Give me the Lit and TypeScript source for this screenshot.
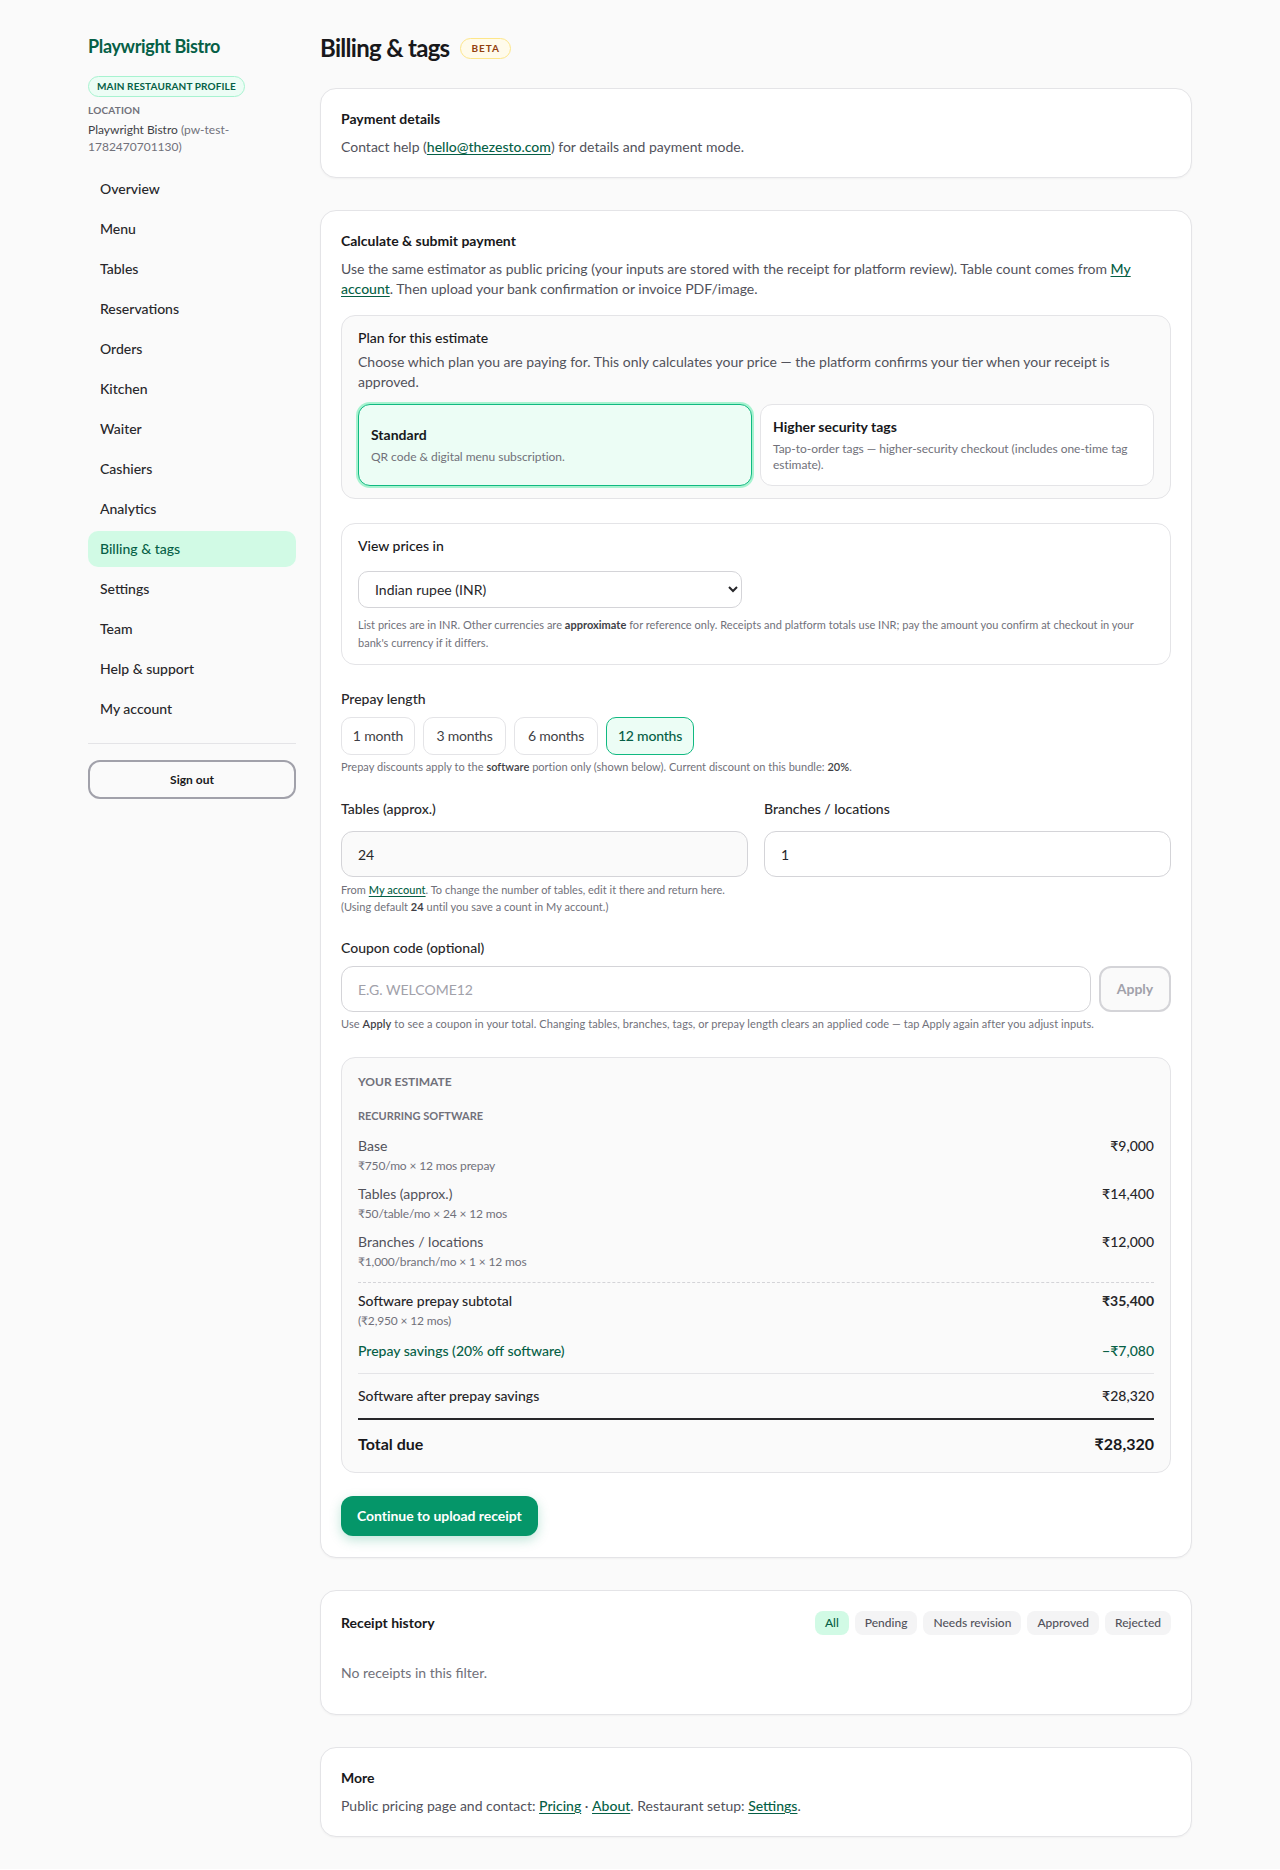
import {html, css, LitElement} from 'lit';
import {customElement} from 'lit/decorators.js';

const NAV = ['Overview', 'Menu', 'Tables', 'Reservations', 'Orders', 'Kitchen', 'Waiter', 'Cashiers', 'Analytics', 'Billing & tags', 'Settings', 'Team', 'Help & support', 'My account'];
const PREPAY = [
	{label: '1 month', width: 74},
	{label: '3 months', width: 83},
	{label: '6 months', width: 84},
	{label: '12 months', width: 88},
];
const LINES = [
	['Base', '₹750/mo × 12 mos prepay', '₹9,000'],
	['Tables (approx.)', '₹50/table/mo × 24 × 12 mos', '₹14,400'],
	['Branches / locations', '₹1,000/branch/mo × 1 × 12 mos', '₹12,000'],
];
const FILTERS = ['All', 'Pending', 'Needs revision', 'Approved', 'Rejected'];

@customElement('app-root')
export class AppRoot extends LitElement {
	static styles = css`
		:host {
			display: block;
			background: #fafafa;
			color: #52525b;
			font: 14px/20px Lato, "Noto Sans", sans-serif;
		}
		* { box-sizing: border-box; }
		a { color: #065f46; font-weight: 500; text-decoration: underline; text-underline-offset: 2px; }
		b { font-weight: 700; color: #3f3f46; }
		button, input, select { font: inherit; margin: 0; }

		.page {
			display: grid;
			grid-template-columns: 208px 872px;
			gap: 24px;
			width: 1104px;
			margin: 0 auto;
			padding: 32px 0;
		}

		/* sidebar */
		.brand { font-size: 18px; line-height: 28px; font-weight: 700; letter-spacing: -0.35px; color: #065f46; }
		.profile {
			display: inline-block;
			margin-top: 16px;
			padding: 0 8px;
			height: 21px;
			border: 1px solid #a7f3d0;
			border-radius: 999px;
			background: #ecfdf5;
			color: #065f46;
			font-size: 10px;
			line-height: 19px;
			font-weight: 700;
			letter-spacing: 0.12px;
			white-space: nowrap;
		}
		.loc-label { margin-top: 6px; font-size: 10px; line-height: 14px; font-weight: 700; letter-spacing: 0.2px; color: #71717a; }
		.loc { margin-top: 4px; font-size: 12px; line-height: 17px; color: #71717a; }
		.loc span { color: #3f3f46; }
		nav { display: flex; flex-direction: column; gap: 4px; margin-top: 16px; }
		nav a {
			height: 36px;
			padding: 0 12px;
			border-radius: 10px;
			color: #27272a;
			font-weight: 500;
			line-height: 36px;
			text-decoration: none;
		}
		nav a.on { background: #d1fae5; color: #065f46; }
		.rule { margin: 16px 0; border-top: 1px solid #e4e4e7; }
		.signout {
			width: 100%;
			height: 39px;
			border: 2px solid #a1a1aa;
			border-radius: 12px;
			background: #fafafa;
			color: #18181b;
			font-size: 12px;
			font-weight: 700;
		}

		/* main column */
		.head { display: flex; align-items: center; gap: 11px; height: 32px; margin-bottom: 24px; }
		h1 { margin: 0; font-size: 24px; line-height: 32px; font-weight: 700; letter-spacing: -0.7px; color: #18181b; }
		.beta {
			height: 21px;
			padding: 0 10px;
			border: 1px solid #fde68a;
			border-radius: 999px;
			background: #fffbeb;
			color: #92400e;
			font-size: 10px;
			line-height: 19px;
			font-weight: 700;
			letter-spacing: 1px;
		}
		.card {
			margin-bottom: 32px;
			padding: 20px;
			border: 1px solid #e4e4e7;
			border-radius: 16px;
			background: #fff;
			box-shadow: 0 1px 2px rgba(0, 0, 0, 0.04);
		}
		.card:last-child { margin-bottom: 0; }
		h2, h3 { margin: 0; font-size: 14px; line-height: 20px; font-weight: 700; color: #18181b; }
		.card > p { margin: 8px 0 0; }
		.box {
			margin-top: 24px;
			padding: 12px 16px;
			border: 1px solid #e4e4e7;
			border-radius: 14px;
		}
		.box.plan { margin-top: 16px; background: #fafafa; }
		.box h3 { font-weight: 500; }
		.box p { margin: 4px 0 0; }
		.plans { display: grid; grid-template-columns: 1fr 1fr; gap: 8px; margin-top: 12px; }
		.tier {
			display: flex;
			flex-direction: column;
			justify-content: center;
			height: 82px;
			padding: 12px;
			border: 1px solid #e4e4e7;
			border-radius: 12px;
			background: #fff;
		}
		.box .tier h3 { font-weight: 700; }
		.tier.on { border-color: #10b981; background: #ecfdf5; box-shadow: 0 0 0 2px #a7f3d0; }
		.tier small { display: block; margin-top: 4px; font-size: 12px; line-height: 16px; letter-spacing: -0.03px; color: #71717a; }
		select {
			display: block;
			width: 384px;
			height: 37px;
			margin-top: 15px;
			padding: 0 12px;
			border: 1px solid #d4d4d8;
			border-radius: 10px;
			background: #fff;
			color: #27272a;
		}
		.fine { font-size: 11px; line-height: 18px; letter-spacing: 0.02px; color: #71717a; }
		.box .fine { margin-top: 8px; }
		.fine.tight { margin-top: 4px; line-height: 16px; }
		.fine.tight b { font-weight: 600; }
		.fine.wide { letter-spacing: 0.08px; }
		label, .label { display: block; font-weight: 500; color: #27272a; }
		.prepay { margin-top: 24px; }
		.pills { display: flex; gap: 8px; margin-top: 8px; }
		.pill {
			height: 38px;
			padding: 0;
			border: 1px solid #e4e4e7;
			border-radius: 10px;
			background: #fff;
			color: #3f3f46;
			letter-spacing: -0.2px;
		}
		.pill.on { border: 1px solid #10b981; background: #ecfdf5; color: #065f46; font-weight: 500; }
		.fields { display: grid; grid-template-columns: 1fr 1fr; gap: 16px; margin-top: 24px; }
		input {
			display: block;
			width: 100%;
			height: 46px;
			margin-top: 12px;
			padding: 0 16px;
			border: 1px solid #d4d4d8;
			border-radius: 12px;
			background: #fff;
			color: #27272a;
		}
		input.locked { background: #fafafa; }
		input::placeholder { color: #a1a1aa; }
		.fine.two { margin-top: 4px; line-height: 17px; }
		.coupon-label { margin-top: 23px; }
		.coupon { display: flex; gap: 8px; margin-top: 8px; }
		.coupon input { flex: 1; margin: 0; }
		.apply {
			flex: none;
			width: 72px;
			height: 46px;
			border: 2px solid #d4d4d8;
			border-radius: 12px;
			background: #fafafa;
			color: #a1a1aa;
			font-weight: 700;
		}
		.estimate { margin-top: 25px; padding: 16px; background: #fafafa; }
		.est-title { font-size: 12px; line-height: 16px; font-weight: 700; color: #71717a; }
		.est-sub { margin-top: 18px; margin-bottom: 12px; font-size: 11px; line-height: 16px; font-weight: 700; color: #71717a; }
		.row { display: flex; justify-content: space-between; margin-top: 10px; color: #52525b; }
		.row small { display: block; margin-top: 2px; font-size: 12px; line-height: 16px; letter-spacing: -0.15px; color: #71717a; }
		.row .amt { color: #27272a; font-weight: 500; }
		.row.strong { color: #27272a; font-weight: 500; }
		.row.strong .amt { font-weight: 700; }
		.row.strong small { font-weight: 400; }
		.row.save, .row.save .amt { color: #065f46; font-weight: 500; }
		.dash { margin: 12px 0 8px; border-top: 1px dashed #d4d4d8; }
		.line { margin: 12px 0; border-top: 1px solid #e4e4e7; }
		.thick { margin: 12px 0 12px; border-top: 2px solid #27272a; }
		.row.flush { margin-top: 0; }
		.row.after .amt { font-weight: 500; }
		.row.spaced { margin-top: 12px; }
		.total { display: flex; justify-content: space-between; font-size: 16px; line-height: 24px; font-weight: 700; color: #18181b; }
		.cta {
			display: block;
			height: 40px;
			margin: 23px 0 1px;
			padding: 0 16px;
			border: 0;
			border-radius: 12px;
			background: #059669;
			color: #fff;
			font-weight: 700;
			letter-spacing: -0.05px;
			box-shadow: 0 4px 12px rgba(5, 150, 105, 0.25);
		}
		.history-head { display: flex; justify-content: space-between; align-items: center; }
		.filters { display: flex; gap: 6px; }
		.filter {
			height: 24px;
			padding: 0 10px;
			border: 0;
			border-radius: 8px;
			background: #f4f4f5;
			color: #52525b;
			font-size: 12px;
			font-weight: 500;
		}
		.filter.on { background: #d1fae5; color: #065f46; }
		.card > p.empty { margin: 28px 0 11px; color: #71717a; }
	`;

	render() {
		return html`
			<div class="page">
				<aside>
					<div class="brand">Playwright Bistro</div>
					<span class="profile">MAIN RESTAURANT PROFILE</span>
					<div class="loc-label">LOCATION</div>
					<div class="loc"><span>Playwright Bistro</span> (pw-test-1782470701130)</div>
					<nav>
						${NAV.map(n => html`<a class=${n === 'Billing & tags' ? 'on' : ''}>${n}</a>`)}
					</nav>
					<div class="rule"></div>
					<button class="signout">Sign out</button>
				</aside>
				<main>
					<div class="head"><h1>Billing &amp; tags</h1><span class="beta">BETA</span></div>

					<section class="card">
						<h2>Payment details</h2>
						<p>Contact help (<a>hello@thezesto.com</a>) for details and payment mode.</p>
					</section>

					<section class="card">
						<h2>Calculate &amp; submit payment</h2>
						<p>Use the same estimator as public pricing (your inputs are stored with the receipt for platform review). Table count comes from <a>My account</a>. Then upload your bank confirmation or invoice PDF/image.</p>

						<div class="box plan">
							<h3>Plan for this estimate</h3>
							<p>Choose which plan you are paying for. This only calculates your price — the platform confirms your tier when your receipt is approved.</p>
							<div class="plans">
								<div class="tier on"><h3>Standard</h3><small>QR code &amp; digital menu subscription.</small></div>
								<div class="tier"><h3>Higher security tags</h3><small>Tap-to-order tags — higher-security checkout (includes one-time tag estimate).</small></div>
							</div>
						</div>

						<div class="box">
							<h3>View prices in</h3>
							<select><option>Indian rupee (INR)</option></select>
							<div class="fine">List prices are in INR. Other currencies are <b>approximate</b> for reference only. Receipts and platform totals use INR; pay the amount you confirm at checkout in your bank's currency if it differs.</div>
						</div>

						<div class="label prepay">Prepay length</div>
						<div class="pills">
							${PREPAY.map(p => html`<button class="pill ${p.label === '12 months' ? 'on' : ''}" style="width:${p.width}px">${p.label}</button>`)}
						</div>
						<div class="fine tight">Prepay discounts apply to the <b>software</b> portion only (shown below). Current discount on this bundle: <b>20%</b>.</div>

						<div class="fields">
							<div><label>Tables (approx.)</label><input class="locked" value="24" /></div>
							<div><label>Branches / locations</label><input value="1" /></div>
						</div>
						<div class="fine two">From <a>My account</a>. To change the number of tables, edit it there and return here.<br />(Using default <b>24</b> until you save a count in My account.)</div>

						<label class="coupon-label">Coupon code (optional)</label>
						<div class="coupon">
							<input placeholder="E.G. WELCOME12" />
							<button class="apply">Apply</button>
						</div>
						<div class="fine tight wide">Use <b>Apply</b> to see a coupon in your total. Changing tables, branches, tags, or prepay length clears an applied code — tap Apply again after you adjust inputs.</div>

						<div class="box estimate">
							<div class="est-title">YOUR ESTIMATE</div>
							<div class="est-sub">RECURRING SOFTWARE</div>
							${LINES.map(l => html`<div class="row"><div>${l[0]}<small>${l[1]}</small></div><div class="amt">${l[2]}</div></div>`)}
							<div class="dash"></div>
							<div class="row strong flush"><div>Software prepay subtotal<small>(₹2,950 × 12 mos)</small></div><div class="amt">₹35,400</div></div>
							<div class="row save spaced"><div>Prepay savings (20% off software)</div><div class="amt">−₹7,080</div></div>
							<div class="line"></div>
							<div class="row strong flush after"><div>Software after prepay savings</div><div class="amt">₹28,320</div></div>
							<div class="thick"></div>
							<div class="total"><span>Total due</span><span>₹28,320</span></div>
						</div>

						<button class="cta">Continue to upload receipt</button>
					</section>

					<section class="card">
						<div class="history-head">
							<h2>Receipt history</h2>
							<div class="filters">
								${FILTERS.map(f => html`<button class="filter ${f === 'All' ? 'on' : ''}">${f}</button>`)}
							</div>
						</div>
						<p class="empty">No receipts in this filter.</p>
					</section>

					<section class="card">
						<h2>More</h2>
						<p>Public pricing page and contact: <a>Pricing</a> · <a>About</a>. Restaurant setup: <a>Settings</a>.</p>
					</section>
				</main>
			</div>
		`;
	}
}
